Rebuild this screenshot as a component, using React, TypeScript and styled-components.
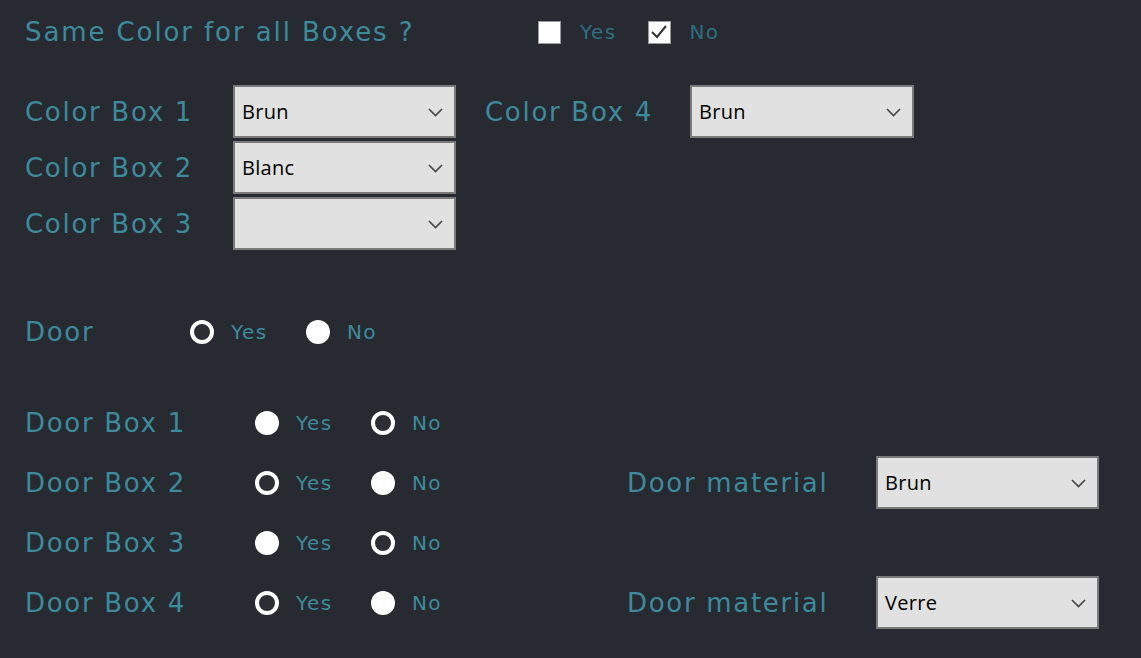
import React from "react";
import styled, { createGlobalStyle } from "styled-components";

const Global = createGlobalStyle`
  html, body { margin: 0; padding: 0; background: #272a31; }
  body { width: 1141px; height: 658px; overflow: hidden; }
`;

const Page = styled.div`
  width: 1141px;
  height: 658px;
  box-sizing: border-box;
  background: #272a31;
  padding: 14px 0 0 25px;
  font-family: "DejaVu Sans", sans-serif;
  color: #3d8a9c;
`;

const Header = styled.div`
  display: flex;
  align-items: center;
  height: 36px;
`;

const Title = styled.div`
  font-size: 26px;
  width: 513px;
  letter-spacing: 1.9px;
  white-space: nowrap;
`;

const Small = styled.span<{ $dim?: boolean }>`
  font-size: 20px;
  letter-spacing: 1.4px;
  color: ${(p) => (p.$dim ? "#2f6f80" : "#3d8a9c")};
`;

const CheckItem = styled.label`
  display: flex;
  align-items: center;
  gap: 19px;
  margin-right: 31px;
`;

const CheckBox = styled.span`
  width: 23px;
  height: 23px;
  box-sizing: border-box;
  background: #fff;
  border: 1px solid #9a9a9a;
  display: flex;
  align-items: center;
  justify-content: center;
`;

const ColorGrid = styled.div`
  display: grid;
  grid-template-columns: 208px 223px 29px 205px 224px;
  grid-auto-rows: 53px;
  row-gap: 3px;
  margin-top: 35px;
  align-items: center;
`;

const Label = styled.div`
  font-size: 26px;
  letter-spacing: 1.7px;
  white-space: nowrap;
`;

const SelectBox = styled.div`
  position: relative;
  height: 53px;
  box-sizing: border-box;
  background: #e1e1e1;
  border: 2px solid #7a7a7a;
  display: flex;
  align-items: center;
  padding-left: 7px;
  font-family: "Open Sans", "Noto Sans", sans-serif;
  font-size: 20px;
  letter-spacing: 0.3px;
  color: #000;
`;

const Chevron = styled.svg`
  position: absolute;
  right: 11px;
  top: 50%;
  margin-top: -4px;
`;

const Select = ({ value }: { value: string }) => (
  <SelectBox>
    {value}
    <Chevron width="15" height="9" viewBox="0 0 15 9">
      <path d="M1 1 L7.5 7.5 L14 1" fill="none" stroke="#444" strokeWidth="1.6" />
    </Chevron>
  </SelectBox>
);

const DoorRow = styled.div`
  display: flex;
  align-items: center;
  height: 40px;
  margin-top: 62px;
`;

const DoorLabel = styled(Label)`
  width: 165px;
`;

const RadioItem = styled.label<{ $w: number }>`
  display: flex;
  align-items: center;
  gap: 17px;
  width: ${(p) => p.$w}px;
`;

const RadioDot = styled.span<{ $checked: boolean }>`
  width: 24px;
  height: 24px;
  box-sizing: border-box;
  border-radius: 50%;
  background: ${(p) => (p.$checked ? "#2c2e33" : "#fff")};
  border: ${(p) => (p.$checked ? "4px solid #fff" : "none")};
`;

const DoorGrid = styled.div`
  display: grid;
  grid-template-columns: 230px 116px 256px 249px 223px;
  grid-auto-rows: 53px;
  row-gap: 7px;
  margin-top: 44px;
  align-items: center;
`;

const Radio = ({ checked, label, w }: { checked: boolean; label: string; w: number }) => (
  <RadioItem $w={w}>
    <RadioDot $checked={checked} />
    <Small>{label}</Small>
  </RadioItem>
);

const doors = [
  { yes: false, no: true, mat: null },
  { yes: true, no: false, mat: "Brun" },
  { yes: false, no: true, mat: null },
  { yes: true, no: false, mat: "Verre" },
];

export default function App() {
  return (
    <Page>
      <Global />
      <Header>
        <Title>Same Color for all Boxes ?</Title>
        <CheckItem>
          <CheckBox />
          <Small $dim>Yes</Small>
        </CheckItem>
        <CheckItem>
          <CheckBox>
            <svg width="18" height="16" viewBox="0 0 18 16">
              <path d="M2 8 L7 13 L16 2" fill="none" stroke="#333" strokeWidth="2" />
            </svg>
          </CheckBox>
          <Small $dim>No</Small>
        </CheckItem>
      </Header>

      <ColorGrid>
        <Label>Color Box 1</Label>
        <Select value="Brun" />
        <span />
        <Label>Color Box 4</Label>
        <Select value="Brun" />
        <Label>Color Box 2</Label>
        <Select value="Blanc" />
        <span />
        <span />
        <span />
        <Label>Color Box 3</Label>
        <Select value="" />
      </ColorGrid>

      <DoorRow>
        <DoorLabel>Door</DoorLabel>
        <Radio checked label="Yes" w={116} />
        <Radio checked={false} label="No" w={100} />
      </DoorRow>

      <DoorGrid>
        {doors.map((d, i) => (
          <React.Fragment key={i}>
            <Label>Door Box {i + 1}</Label>
            <Radio checked={d.yes} label="Yes" w={116} />
            <Radio checked={d.no} label="No" w={100} />
            {d.mat ? <Label>Door material</Label> : <span />}
            {d.mat ? <Select value={d.mat} /> : <span />}
          </React.Fragment>
        ))}
      </DoorGrid>
    </Page>
  );
}
